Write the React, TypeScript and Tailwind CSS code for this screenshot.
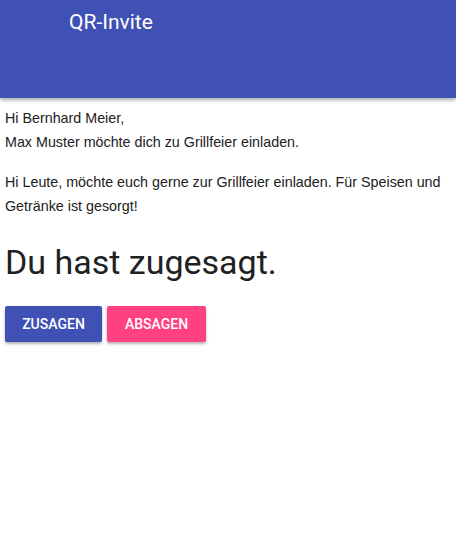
import React from "react";

export default function App() {
  return (
    <div className="min-h-[547px] bg-white" style={{ fontFamily: "Roboto, 'Liberation Sans', sans-serif" }}>
      <header className="h-[98px] bg-[#3f51b5] shadow-[0_2px_4px_rgba(0,0,0,0.35)] relative z-10">
        <div className="pl-[69px] pt-[8px] text-[21px] leading-[28px] text-white">QR-Invite</div>
      </header>
      <main className="px-[5px] pt-[8px] text-[14px] leading-[24px] text-[#212121]">
        <div className="text-[14.3px]" style={{ fontFamily: "'Liberation Sans', Arial, sans-serif" }}>
          <p>
            Hi Bernhard Meier,
            <br />
            Max Muster möchte dich zu Grillfeier einladen.
          </p>
          <p className="mt-[16px]">
            Hi Leute, möchte euch gerne zur Grillfeier einladen. Für Speisen und Getränke ist gesorgt!
          </p>
        </div>
        <h1 className="mt-[24px] text-[34px] leading-[40px] text-[#212121]">Du hast zugesagt.</h1>
        <div className="mt-[24px] flex gap-[5px]">
          <button className="h-[36px] w-[97px] rounded-[2px] bg-[#3f51b5] text-[14px] font-medium uppercase text-white shadow-[0_2px_3px_rgba(0,0,0,0.3)]">
            Zusagen
          </button>
          <button className="h-[36px] w-[99px] rounded-[2px] bg-[#ff4081] text-[14px] font-medium uppercase text-white shadow-[0_2px_3px_rgba(0,0,0,0.3)]">
            Absagen
          </button>
        </div>
      </main>
    </div>
  );
}
